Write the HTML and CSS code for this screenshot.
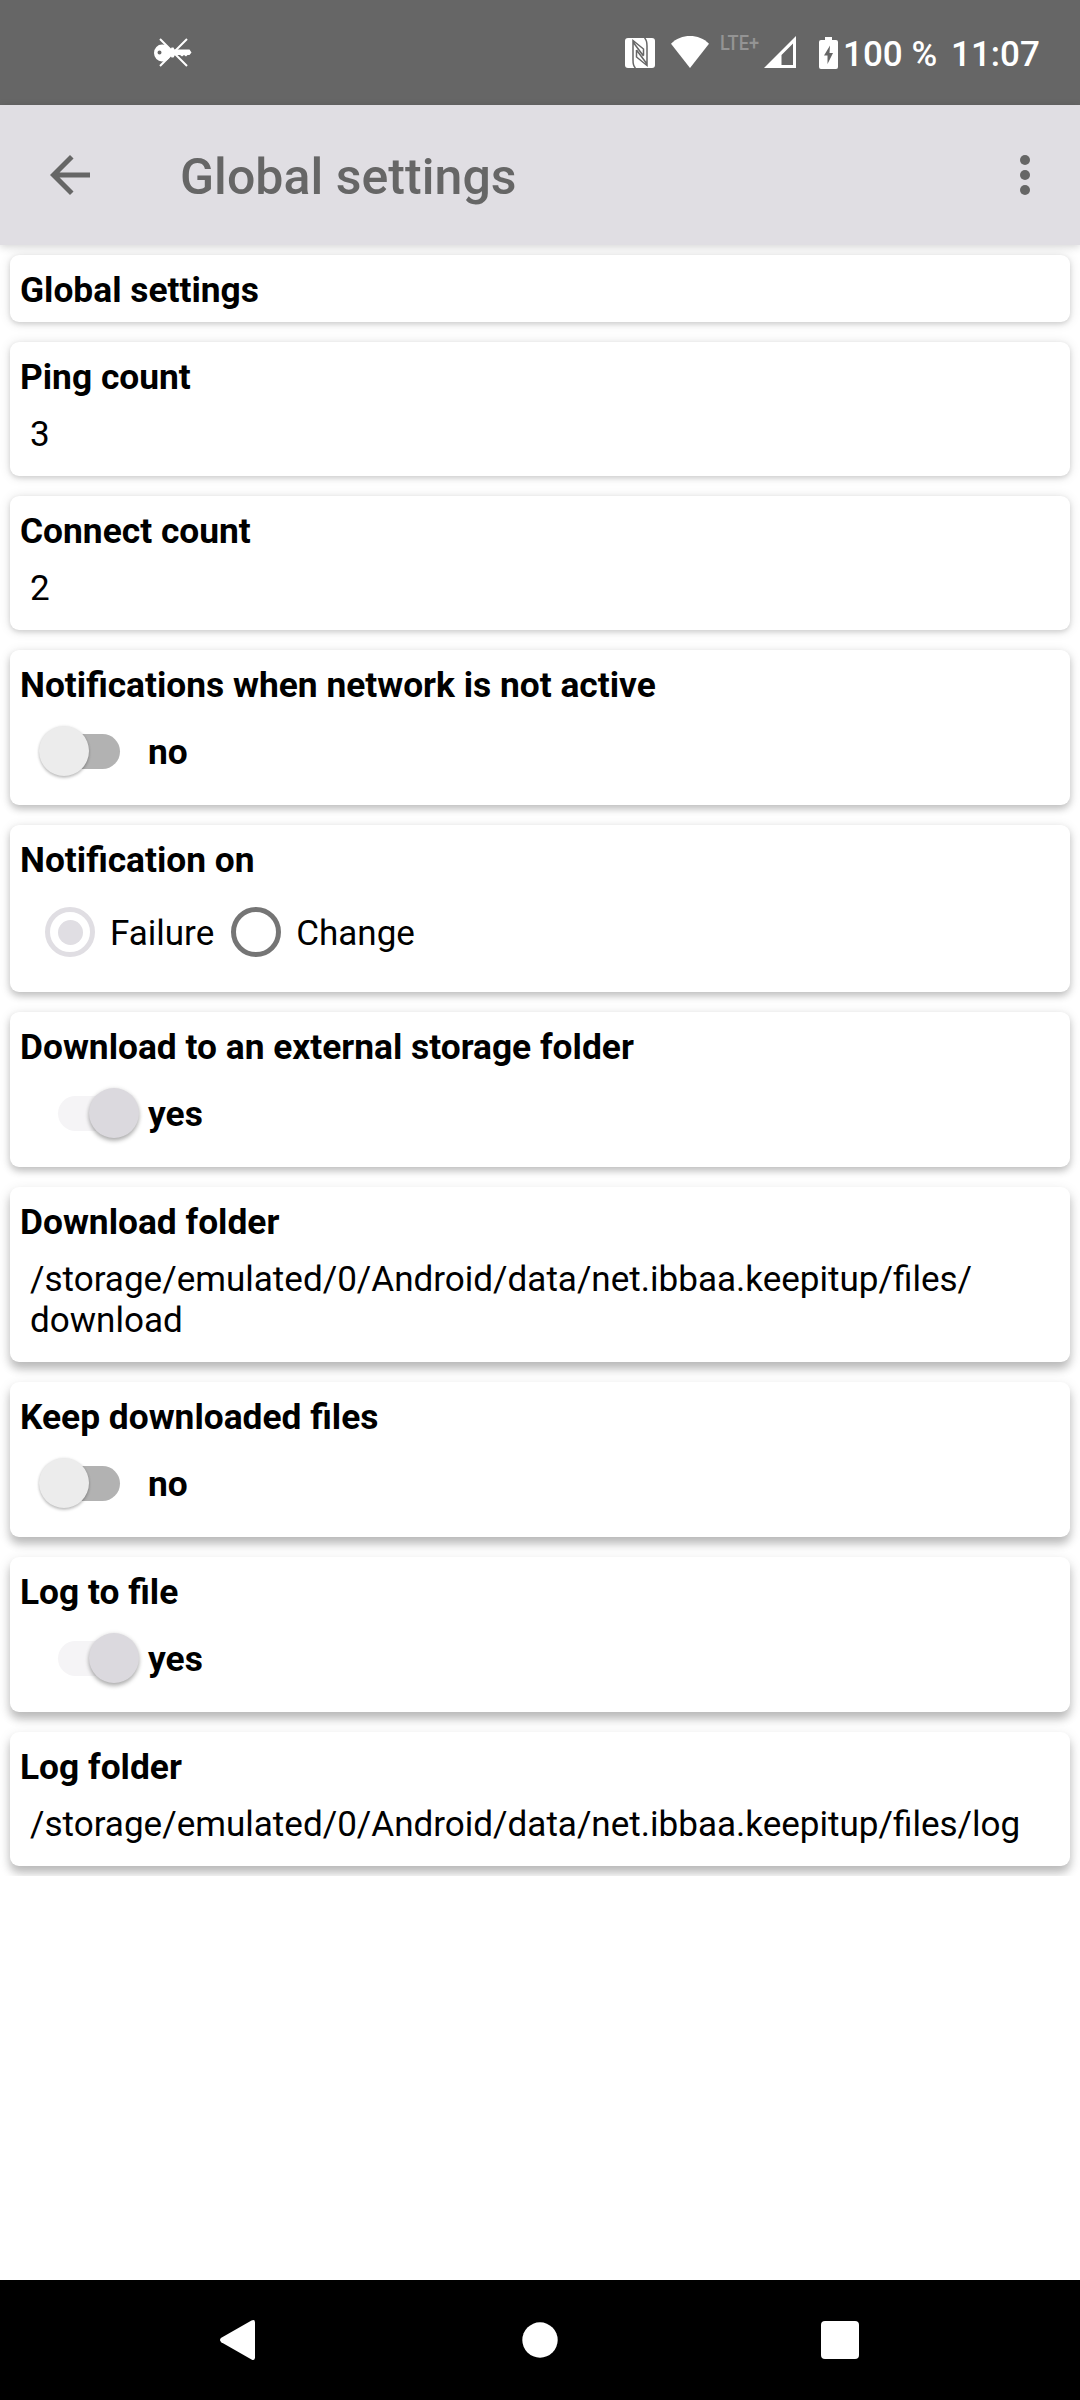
FILE: index.html
```html
<!DOCTYPE html>
<html lang="en">
<head>
<meta charset="utf-8">
<title>Global settings</title>
<link rel="stylesheet" href="styles.css">
</head>
<body>
<div class="screen">
  <header class="status">
    <svg class="key" width="40" height="30" viewBox="153 37 40 30"><path d="M160 39l27 27M187 39l-27 27" stroke="#fff" stroke-width="2"/><path fill="#fff" fill-rule="evenodd" d="M162 44.500c4 0 7 2 8.500 5.500l1-2.500h2l1 2h15l2 3-2 2.500h-2l-1.500 1.500-2-1.500-2 1.500-2-1.500h-5l-1.500 2.500h-2l-1-2c-1.500 4-4.500 6-8.500 6a8 8.500 0 0 1 0-17zM159.500 50.500a2 2 0 1 0 0 4 2 2 0 0 0 0-4z"/></svg>
    <svg class="nfc" width="30" height="30" viewBox="0 0 30 30"><rect width="30" height="30" rx="3" fill="#fff"/><path d="M11.500 12V19L22 27.500V8Q22 2 19.500 0M18.500 17.500V11L8 2.500V22Q8 28 10.500 30M11.500 12L22 26M18.500 18L8 4" fill="none" stroke="#666" stroke-width="1.500"/></svg>
    <svg class="wifi" width="38" height="32" viewBox="0 0 38 32"><path fill="#fff" d="M0 7.700C5 2.500 12 0 19 0s14 2.500 19 7.700L19 32z"/></svg>
    <svg class="lte" width="44" height="26" viewBox="0 0 44 26"><text x="0" y="20" textLength="39" lengthAdjust="spacingAndGlyphs">LTE+</text></svg>
    <svg class="signal" width="32" height="32" viewBox="0 0 32 32"><path fill="#fff" fill-rule="evenodd" d="M0 32L32 0v32zM17.500 19v10H29V7.500z"/></svg>
    <svg class="battery" width="19" height="32" viewBox="0 0 19 32"><path fill="#fff" fill-rule="evenodd" d="M6 0h7v3h4q2 0 2 2v25q0 2-2 2H2q-2 0-2-2V5q0-2 2-2h4zM11 8.500L5 18.500h3.500V27L14 16h-3.500z"/></svg>
    <span class="percent">100 %</span>
    <span class="clock">11:07</span>
  </header>
  <div class="appbar">
    <svg class="icon" viewBox="0 0 24 24"><path d="M20 11H7.830l5.590-5.590L12 4l-8 8 8 8 1.410-1.410L7.830 13H20z"/></svg>
    <h1>Global settings</h1>
    <svg class="icon" viewBox="0 0 24 24"><circle cx="12" cy="6" r="2"/><circle cx="12" cy="12" r="2"/><circle cx="12" cy="18" r="2"/></svg>
  </div>
  <main class="list">
    <section class="card heading"><h2>Global settings</h2></section>
    <section class="card"><h2>Ping count</h2><p>3</p></section>
    <section class="card"><h2>Connect count</h2><p>2</p></section>
    <section class="card mid"><h2>Notifications when network is not active</h2><div class="toggle"><span class="switch"></span><b>no</b></div></section>
    <section class="card mid"><h2>Notification on</h2><div class="radios"><span class="radio on"></span><span class="label">Failure</span><span class="radio"></span><span class="label">Change</span></div></section>
    <section class="card mid"><h2>Download to an external storage folder</h2><div class="toggle"><span class="switch on"></span><b>yes</b></div></section>
    <section class="card low"><h2>Download folder</h2><p>/storage/emulated/0/Android/data/net.ibbaa.keepitup/files/<br>download</p></section>
    <section class="card low"><h2>Keep downloaded files</h2><div class="toggle"><span class="switch"></span><b>no</b></div></section>
    <section class="card low"><h2>Log to file</h2><div class="toggle"><span class="switch on"></span><b>yes</b></div></section>
    <section class="card low"><h2>Log folder</h2><p>/storage/emulated/0/Android/data/net.ibbaa.keepitup/files/log</p></section>
  </main>
  <nav class="navbar">
    <svg width="36" height="40" viewBox="0 0 36 40"><path d="M1.300 17.800L31.500.600Q35 -1 35 2.500V37.500Q35 41 31.500 39.400L1.300 22.200Q-1.300 20 1.300 17.800z"/></svg>
    <svg width="36" height="36" viewBox="0 0 36 36"><circle cx="18" cy="18" r="17.700"/></svg>
    <svg width="38" height="38" viewBox="0 0 38 38"><rect width="38" height="38" rx="4"/></svg>
  </nav>
</div>
</body>
</html>
```
FILE: styles.css
```css
* { box-sizing: border-box; }
body { margin: 0; background: #fff; font-family: Roboto, sans-serif; font-size: 35px; line-height: 41px; color: #000; }
h1, h2, p { margin: 0; }
.screen { width: 1080px; height: 2400px; display: flex; flex-direction: column; }

.status { height: 105px; flex: none; background: #666; color: #fff; display: flex; align-items: flex-start; padding: 33px 0 0 153px; font-weight: 500; }
.status svg { flex: none; }
.key { margin-top: 4px; }
.nfc { margin: 5px 0 0 432px; }
.wifi { margin: 3px 0 0 16px; }
.lte { margin: -3px 0 0 11px; }
.lte text { font-size: 20px; font-weight: 500; fill: #949494; }
.signal { margin-top: 3px; }
.battery { margin: 4px 0 0 23px; }
.percent { margin: 1px 0 0 5px; white-space: nowrap; width: 108px; }
.clock { margin-top: 1px; }

.appbar { height: 140px; flex: none; background: #e0dee3; display: flex; align-items: center; padding: 0 25px 0 40px; position: relative; z-index: 1; box-shadow: 0 2px 8px rgba(0, 0, 0, .17); }
.appbar h1 { flex: 1; margin-left: 80px; padding-top: 3px; font-size: 50px; line-height: 60px; font-weight: 500; letter-spacing: .05px; color: #666; }
.icon { width: 60px; height: 60px; fill: #666; }

.list { display: flex; flex-direction: column; gap: 20px; padding: 10px; overflow: hidden; }
.card { background: #fff; border-radius: 9px; padding: 15px 10px 21px; box-shadow: 0 2px 5px rgba(0, 0, 0, .13), 0 1px 12px rgba(0, 0, 0, .12); }
.card.mid { box-shadow: 0 4px 7px rgba(0, 0, 0, .18), 0 2px 12px rgba(0, 0, 0, .12); }
.card.low { box-shadow: 0 7px 9px rgba(0, 0, 0, .2), 0 4px 14px rgba(0, 0, 0, .12); }
.card.heading { padding-bottom: 11px; }
.card h2 { font-size: 35.33px; line-height: 41px; font-weight: 700; }
.card p { margin: 16px 0 0 10px; font-size: 35.05px; }

.toggle { display: flex; align-items: center; height: 70px; margin: 10px 0 -2px 19px; }
.toggle b { margin: 3px 0 0 9px; font-size: 35.33px; }
.switch { width: 100px; height: 50px; display: flex; align-items: center; position: relative; }
.switch::before { content: ""; width: 62px; height: 35px; margin-left: 19px; border-radius: 18px; background: #b2b2b2; }
.switch::after { content: ""; position: absolute; left: 0; top: 0; width: 50px; height: 50px; border-radius: 50%; background: #ececec; box-shadow: 0 2px 3px rgba(0, 0, 0, .22), 0 0 3px rgba(0, 0, 0, .1); }
.switch.on::before { background: #f5f4f6; }
.switch.on::after { left: 50px; background: #dbd9de; box-shadow: 0 3px 4px rgba(0, 0, 0, .28), 0 0 4px rgba(0, 0, 0, .1); }

.radios { display: flex; align-items: center; height: 80px; margin: 11px 0 -1px 10px; }
.radio { width: 50px; height: 50px; margin: 0 15px; border: 5px solid #757575; border-radius: 50%; display: grid; place-items: center; }
.radio.on { border-color: #e0dee3; }
.radio.on::before { content: ""; width: 25px; height: 25px; border-radius: 50%; background: #e0dee3; }
.label { padding: 2px 2px 0 0; }

.navbar { height: 120px; flex: none; margin-top: auto; background: #000; display: flex; align-items: center; justify-content: space-between; padding: 0 221px 0 220px; }
.navbar svg { fill: #fff; }
.navbar svg:nth-child(2) { margin-left: 2px; }
```
